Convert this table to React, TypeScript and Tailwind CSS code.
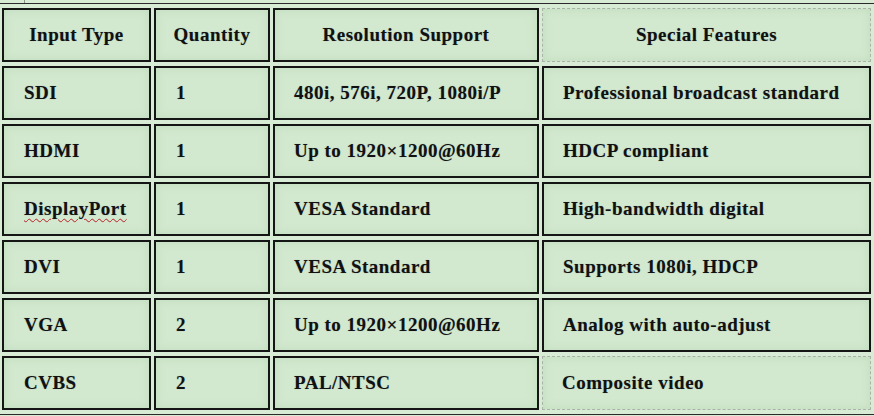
const rows = [
  { type: "SDI", qty: "1", res: "480i, 576i, 720P, 1080i/P", feat: "Professional broadcast standard" },
  { type: "HDMI", qty: "1", res: "Up to 1920×1200@60Hz", feat: "HDCP compliant" },
  { type: "DisplayPort", qty: "1", res: "VESA Standard", feat: "High-bandwidth digital", misspelled: true },
  { type: "DVI", qty: "1", res: "VESA Standard", feat: "Supports 1080i, HDCP" },
  { type: "VGA", qty: "2", res: "Up to 1920×1200@60Hz", feat: "Analog with auto-adjust" },
  { type: "CVBS", qty: "2", res: "PAL/NTSC", feat: "Composite video", dashed: true },
]

const cell = "h-[54px] border-2 border-[#151515] bg-[#d2e8cf] shadow-[inset_0_0_8px_rgba(190,220,186,0.9)] p-0 align-middle"
const dashedCell = "h-[54px] border border-dashed border-[#a9b3a7] bg-[#d2e8cf] shadow-[inset_0_0_8px_rgba(190,220,186,0.9)] p-0 align-middle"

export default function App() {
  return (
    <div
      className="relative h-[416px] w-[874px] overflow-hidden bg-[#d8ecd5] text-[#111] [text-shadow:0_0_1px_rgba(40,60,90,0.35)]"
      style={{ fontFamily: '"Liberation Serif", "Times New Roman", serif' }}
    >
      <div className="absolute left-[24px] top-0 h-[3px] w-px bg-[#8a9588]" />
      <table className="ml-[-2px] mt-[3px] w-[877px] table-fixed border-separate border-spacing-x-[3px] border-spacing-y-[4px] border border-[#2a2a2a] text-[19px] font-bold tracking-[0.5px]">
        <colgroup>
          <col className="w-[149px]" />
          <col className="w-[116px]" />
          <col className="w-[266px]" />
          <col className="w-[329px]" />
        </colgroup>
        <thead>
          <tr>
            <th className={`${cell} text-center`}>Input Type</th>
            <th className={`${cell} text-center`}>Quantity</th>
            <th className={`${cell} text-center`}>Resolution Support</th>
            <th className={`${dashedCell} text-center`}>Special Features</th>
          </tr>
        </thead>
        <tbody>
          {rows.map((r) => (
            <tr key={r.type}>
              <td className={`${cell} pl-[20px]`}>
                {r.misspelled ? (
                  <span className="underline decoration-wavy decoration-[#d03030] decoration-1 underline-offset-[3px]">
                    {r.type}
                  </span>
                ) : (
                  r.type
                )}
              </td>
              <td className={`${cell} pl-[20px]`}>{r.qty}</td>
              <td className={`${cell} pl-[19px]`}>{r.res}</td>
              <td className={`${r.dashed ? dashedCell : cell} pl-[19px]`}>{r.feat}</td>
            </tr>
          ))}
        </tbody>
      </table>
    </div>
  )
}
